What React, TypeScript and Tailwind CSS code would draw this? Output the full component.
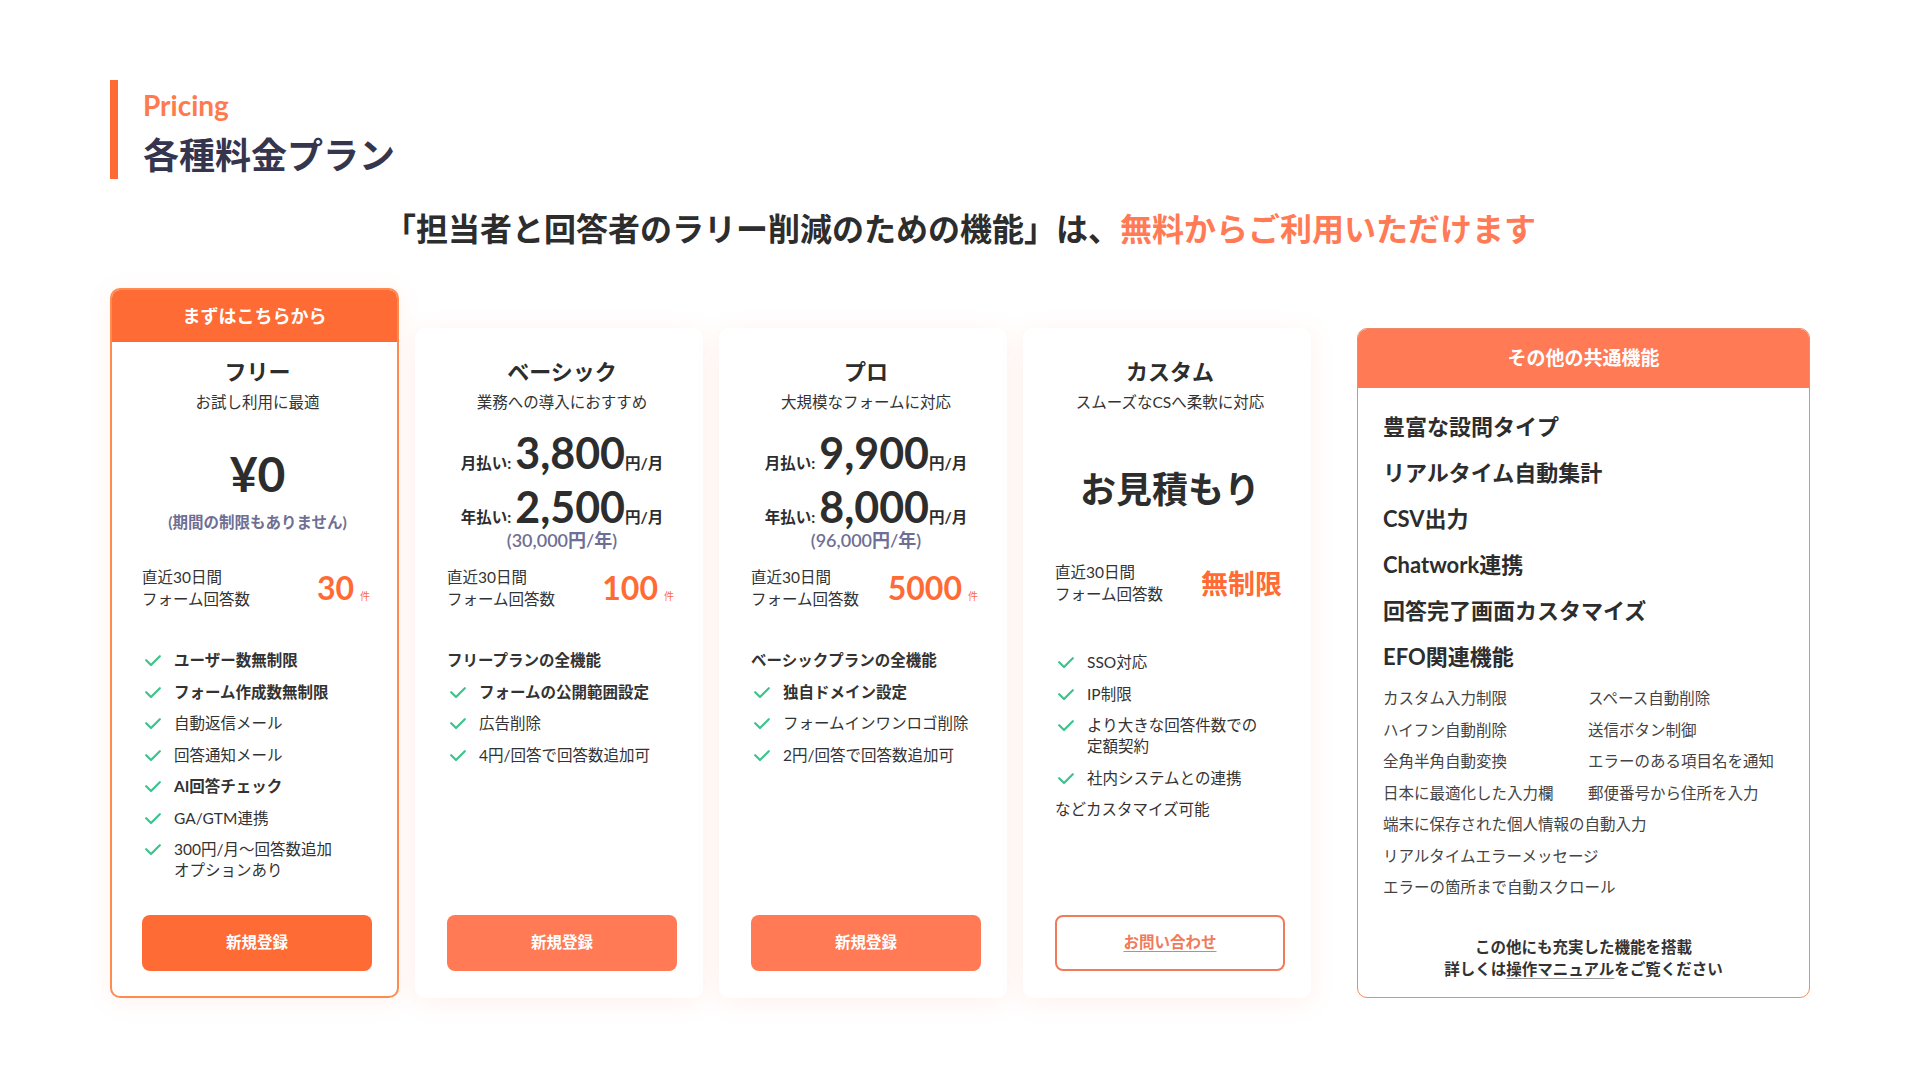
import React from "react";

type Feature = { text: string[]; bold?: boolean; check?: boolean };

type Plan = {
  name: string;
  sub: string;
  count: string;
  countUnit?: boolean;
  features: Feature[];
  cta: string;
  outline?: boolean;
};

const plans: Plan[] = [
  {
    name: "ベーシック",
    sub: "業務への導入におすすめ",
    count: "100",
    countUnit: true,
    features: [
      { text: ["フリープランの全機能"], bold: true, check: false },
      { text: ["フォームの公開範囲設定"], bold: true, check: true },
      { text: ["広告削除"], check: true },
      { text: ["4円/回答で回答数追加可"], check: true },
    ],
    cta: "新規登録",
  },
  {
    name: "プロ",
    sub: "大規模なフォームに対応",
    count: "5000",
    countUnit: true,
    features: [
      { text: ["ベーシックプランの全機能"], bold: true, check: false },
      { text: ["独自ドメイン設定"], bold: true, check: true },
      { text: ["フォームインワンロゴ削除"], check: true },
      { text: ["2円/回答で回答数追加可"], check: true },
    ],
    cta: "新規登録",
  },
  {
    name: "カスタム",
    sub: "スムーズなCSへ柔軟に対応",
    count: "無制限",
    features: [
      { text: ["SSO対応"], check: true },
      { text: ["IP制限"], check: true },
      { text: ["より大きな回答件数での", "定額契約"], check: true },
      { text: ["社内システムとの連携"], check: true },
      { text: ["などカスタマイズ可能"], check: false },
    ],
    cta: "お問い合わせ",
    outline: true,
  },
];

const freeFeatures: Feature[] = [
  { text: ["ユーザー数無制限"], bold: true, check: true },
  { text: ["フォーム作成数無制限"], bold: true, check: true },
  { text: ["自動返信メール"], check: true },
  { text: ["回答通知メール"], check: true },
  { text: ["AI回答チェック"], bold: true, check: true },
  { text: ["GA/GTM連携"], check: true },
  { text: ["300円/月〜回答数追加", "オプションあり"], check: true },
];

const bigFeatures = [
  "豊富な設問タイプ",
  "リアルタイム自動集計",
  "CSV出力",
  "Chatwork連携",
  "回答完了画面カスタマイズ",
  "EFO関連機能",
];

const efoPairs = [
  ["カスタム入力制限", "スペース自動削除"],
  ["ハイフン自動削除", "送信ボタン制御"],
  ["全角半角自動変換", "エラーのある項目名を通知"],
  ["日本に最適化した入力欄", "郵便番号から住所を入力"],
];

const efoSingles = [
  "端末に保存された個人情報の自動入力",
  "リアルタイムエラーメッセージ",
  "エラーの箇所まで自動スクロール",
];

const CheckMark = () => (
  <svg width="16" height="12" viewBox="0 0 16 12" className="mt-[5px] ml-[3px] mr-[13px] shrink-0">
    <path d="M1.2 5.2 L6 10 L14.8 1.2" fill="none" stroke="#3cc48b" strokeWidth="2.2" strokeLinecap="round" strokeLinejoin="round" />
  </svg>
);

const FeatureList = ({ items }: { items: Feature[] }) => (
  <ul className="flex flex-col gap-[10.5px]">
    {items.map((f, i) => (
      <li key={i} className="flex items-start">
        {f.check && <CheckMark />}
        <span className={`leading-[21px] text-[15.5px] text-[#333] ${f.bold ? "font-bold" : ""}`}>
          {f.text.map((t, j) => (
            <span key={j} className="block">
              {t}
            </span>
          ))}
        </span>
      </li>
    ))}
  </ul>
);

const Stats = ({ count, unit }: { count: string; unit?: boolean }) => (
  <div className="flex items-center justify-between">
    <div className="text-[15.5px] leading-[22px] text-[#333]">
      <p>直近30日間</p>
      <p>フォーム回答数</p>
    </div>
    <div className="flex items-baseline gap-[6px] pr-[3px] text-[#ff6a35]">
      <span className={`font-bold leading-none ${unit ? "text-[32px]" : "text-[27px]"}`}>{count}</span>
      {unit && <span className="text-[10px]">件</span>}
    </div>
  </div>
);

const PriceRow = ({ label, value }: { label: string; value: string }) => (
  <div className="flex items-baseline justify-center font-bold text-[#2d2d2d]">
    <span className="text-[15.5px]">{label}</span>
    <span className="ml-[4px] text-[43px] leading-[44px]">{value}</span>
    <span className="text-[15.5px]">円/月</span>
  </div>
);

export default function App() {
  return (
    <div className="min-h-screen bg-white text-[#333] font-['Lato','Noto_Sans_CJK_JP',sans-serif]">
      <div className="mx-auto w-[1700px] pt-[80px] pb-[80px]">
        {/* 見出し */}
        <div className="h-[99px] border-l-[8px] border-[#ff6b35] pl-[25px] pt-[8px]">
          <p className="text-[28px] font-bold leading-[34px] text-[#ff7a4d]">Pricing</p>
          <h1 className="mt-[11px] text-[36px] font-bold leading-[44px] text-[#35354d]">各種料金プラン</h1>
        </div>

        <p className="mt-[30px] text-center text-[32px] font-bold leading-[40px] text-[#2d2d2d]">
          「担当者と回答者のラリー削減のための機能」は、
          <span className="text-[#ff7a55]">無料からご利用いただけます</span>
        </p>

        {/* プラン一覧 */}
        <div className="mt-[39px] flex items-end">
          <div className="flex items-end gap-4">
            {/* フリー */}
            <div className="flex h-[710px] w-[289px] flex-col overflow-hidden rounded-[10px] border-2 border-[#ff8c4f] bg-white shadow-[0_4px_24px_rgba(255,130,90,0.10)]">
              <div className="flex h-[52px] items-center justify-center bg-[#ff6b35] text-[18px] font-bold text-white">
                まずはこちらから
              </div>
              <div className="flex flex-1 flex-col pl-[30px] pr-[24px] pt-[15px] pb-[25px]">
                <h2 className="text-center text-[22px] font-bold leading-[30px] text-[#2d2d2d]">フリー</h2>
                <p className="mt-[4px] text-center text-[15.5px] leading-[22px]">お試し利用に最適</p>
                <div className="flex h-[153px] flex-col items-center pt-[37px]">
                  <p className="text-[48px] font-bold leading-[48px] text-[#2d2d2d]">¥0</p>
                  <p className="mt-[12px] text-[15.5px] font-bold leading-[24px] text-[#6e6f95]">(期間の制限もありません)</p>
                </div>
                <Stats count="30" unit />
                <div className="mt-[40px]">
                  <FeatureList items={freeFeatures} />
                </div>
                <button className="mt-auto h-[56px] w-[230px] rounded-[8px] bg-[#ff6b35] text-[15.5px] font-bold text-white">
                  新規登録
                </button>
              </div>
            </div>

            {plans.map((p) => (
              <div
                key={p.name}
                className="flex h-[670px] w-[288px] flex-col rounded-[10px] bg-white pl-8 pr-[26px] pt-[29px] pb-[27px] shadow-[0_4px_24px_rgba(255,130,90,0.12)]"
              >
                <h2 className="text-center text-[22px] font-bold leading-[30px] text-[#2d2d2d]">{p.name}</h2>
                <p className="mt-[4px] text-center text-[15.5px] leading-[22px]">{p.sub}</p>
                {p.outline ? (
                  <div className="flex h-[148px] justify-center pt-[54px]">
                    <p className="text-[36px] font-bold leading-[44px] text-[#2d2d2d]">お見積もり</p>
                  </div>
                ) : (
                  <div className="flex h-[153px] flex-col items-center pt-[18px]">
                    <PriceRow label="月払い:" value={p.name === "プロ" ? "9,900" : "3,800"} />
                    <div className="mt-[10px]">
                      <PriceRow label="年払い:" value={p.name === "プロ" ? "8,000" : "2,500"} />
                    </div>
                    <p className="text-[18px] font-semibold leading-[20px] text-[#6e6f95]">
                      {p.name === "プロ" ? "(96,000円/年)" : "(30,000円/年)"}
                    </p>
                  </div>
                )}
                <Stats count={p.count} unit={p.countUnit} />
                <div className={p.outline ? "mt-[47px]" : "mt-[40px]"}>
                  <FeatureList items={p.features} />
                </div>
                {p.outline ? (
                  <button className="mt-auto h-[56px] w-[230px] rounded-[8px] border-2 border-[#f07a5a] bg-white text-[15.5px] font-bold text-[#f07a5a] underline underline-offset-[3px]">
                    {p.cta}
                  </button>
                ) : (
                  <button className="mt-auto h-[56px] w-[230px] rounded-[8px] bg-[#ff7a55] text-[15.5px] font-bold text-white">
                    {p.cta}
                  </button>
                )}
              </div>
            ))}
          </div>

          {/* その他の共通機能 */}
          <div className="ml-auto flex h-[670px] w-[453px] flex-col overflow-hidden rounded-[10px] border border-[#f08a68] bg-white">
            <div className="flex h-[59px] items-center justify-center bg-[#ff7a55] text-[19px] font-bold text-white">
              その他の共通機能
            </div>
            <div className="flex flex-1 flex-col px-[25px] pt-[24px] pb-[17px]">
              <ul className="flex flex-col gap-[16px]">
                {bigFeatures.map((f) => (
                  <li key={f} className="text-[22px] font-bold leading-[30px] text-[#2d2d2d]">
                    {f}
                  </li>
                ))}
              </ul>
              <div className="mt-[16px] grid grid-cols-[205px_1fr] gap-y-[10px] text-[15.5px] leading-[21.5px] text-[#444]">
                {efoPairs.map(([a, b]) => (
                  <React.Fragment key={a}>
                    <span>{a}</span>
                    <span>{b}</span>
                  </React.Fragment>
                ))}
                {efoSingles.map((s) => (
                  <span key={s} className="col-span-2">
                    {s}
                  </span>
                ))}
              </div>
              <div className="mt-auto text-center text-[15.5px] font-bold leading-[22px] text-[#333]">
                <p>この他にも充実した機能を搭載</p>
                <p>
                  詳しくは<span className="underline decoration-[#999] underline-offset-[3px]">操作マニュアル</span>をご覧ください
                </p>
              </div>
            </div>
          </div>
        </div>
      </div>
    </div>
  );
}
